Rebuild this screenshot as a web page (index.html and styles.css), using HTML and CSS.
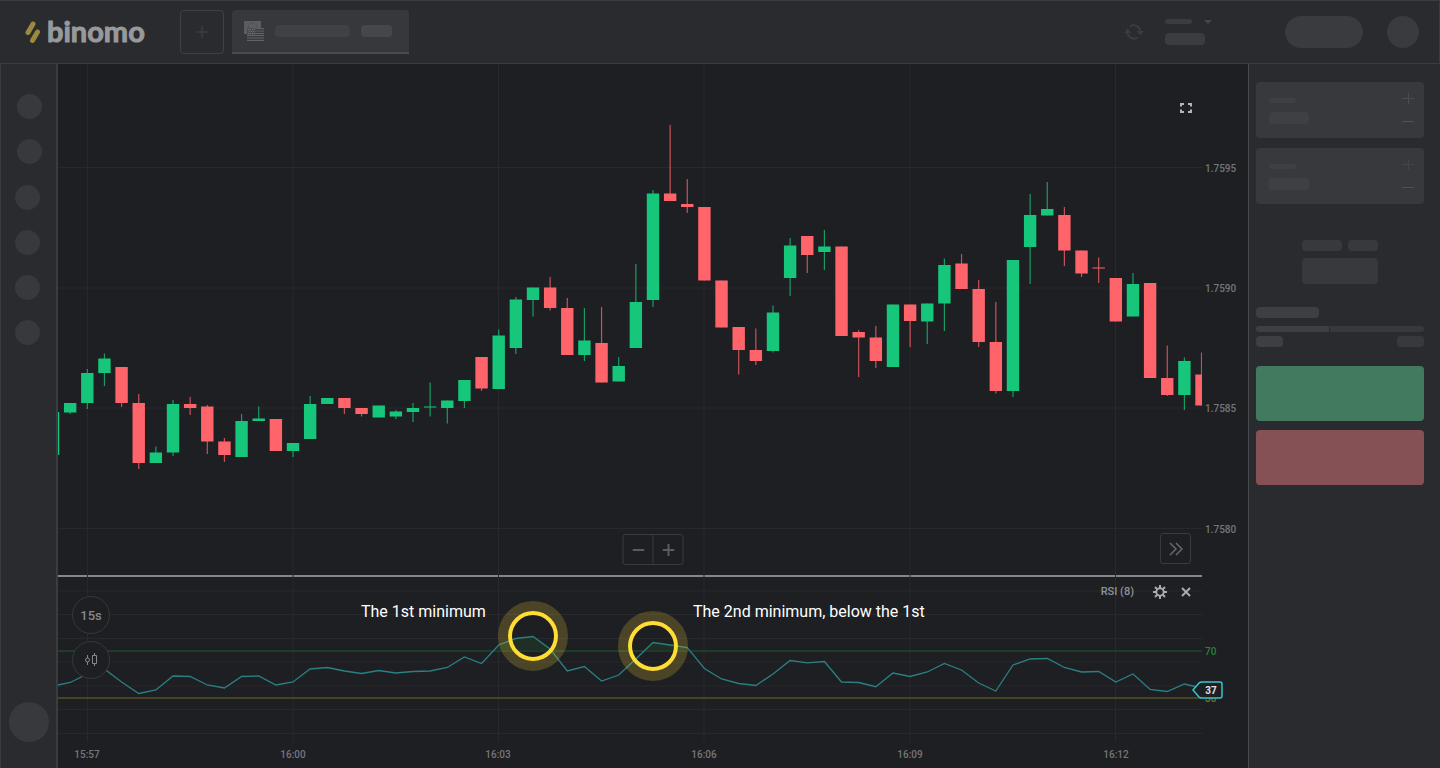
FILE: index.html
```html
<!DOCTYPE html>
<html lang="en">
<head>
<meta charset="utf-8">
<meta name="viewport" content="width=device-width, initial-scale=1">
<title>binomo</title>
<link rel="stylesheet" href="styles.css">
</head>
<body class="app">
<header class="topbar">
  <a class="logo" href="#" aria-label="binomo">
    <svg class="logo-mark" width="17" height="24" viewBox="0 0 17 24" aria-hidden="true">
      <path d="M4 12.500 9 4M8.500 20.500 13.500 12" />
    </svg>
    <span class="logo-name">binomo</span>
  </a>
  <button class="add-tab" type="button" aria-label="Add asset">
    <svg width="12" height="12" viewBox="0 0 12 12"><path d="M6 0V12M0 6H12" /></svg>
  </button>
  <button class="asset-tab" type="button" aria-label="Current asset">
    <svg class="flags" width="20" height="20" viewBox="0 0 20 20" aria-hidden="true">
      <rect width="17" height="13" fill="#5c5d60" />
      <circle cx="8.500" cy="6" r="4" fill="none" stroke="#47484c" stroke-dasharray="1 1" />
      <rect x="3" y="7" width="17" height="13" fill="#3a3b3f" />
      <path d="M3 7.500H20M3 10H20M3 12.500H20M3 14.500H20M3 17H20M3 19.500H20" stroke="#626366" />
      <rect x="3" y="7" width="8" height="7" fill="#4a4b4f" />
      <path d="M4 8.500H11M5 10.500H11M4 12.500H11" stroke="#717275" stroke-dasharray="1 1" />
    </svg>
    <span class="bar bar-asset"></span>
    <span class="bar bar-rate"></span>
  </button>
  <div class="account">
    <button class="sync" type="button" aria-label="Refresh">
      <svg width="20" height="16" viewBox="0 0 20 16">
        <path class="sync-arc" d="M6 2.500A6.800 6.800 0 0 1 16.500 8M14 13.500A6.800 6.800 0 0 1 3.500 8" />
        <path class="sync-head" d="M12.500 7H20L16.500 11.500ZM0 9 3.500 4.500 7.500 9Z" />
      </svg>
    </button>
    <button class="balance" type="button" aria-label="Balance">
      <span class="balance-top"><span class="bar bar-type"></span>
        <svg width="8" height="5" viewBox="0 0 8 5"><path d="M0 1H8L4 5Z" /></svg></span>
      <span class="bar bar-sum"></span>
    </button>
    <button class="deposit" type="button" aria-label="Deposit"></button>
    <button class="avatar" type="button" aria-label="Profile"></button>
  </div>
</header>

<div class="workspace">
  <nav class="rail" aria-label="Sections">
    <div class="rail-group rail-main">
      <button class="dot" type="button" aria-label="Section 1"></button>
      <button class="dot" type="button" aria-label="Section 2"></button>
    </div>
    <div class="rail-group">
      <button class="dot" type="button" aria-label="Section 3"></button>
      <button class="dot" type="button" aria-label="Section 4"></button>
      <button class="dot" type="button" aria-label="Section 5"></button>
      <button class="dot" type="button" aria-label="Section 6"></button>
    </div>
    <button class="support" type="button" aria-label="Support"></button>
  </nav>

  <main class="chart">
    <svg class="plot" viewBox="58 64 1190 704" preserveAspectRatio="xMidYMin meet" role="img" aria-label="Price chart with RSI">
      <defs>
        <clipPath id="plot-area"><rect x="58" y="64" width="1144" height="680" /></clipPath>
        <clipPath id="overbought"><rect x="58" y="580" width="1144" height="71" /></clipPath>
      </defs>
      <path class="split" d="M58 576H1202" />
      <g class="grid" id="grid"></g>
      <path class="level-high" d="M58 651H1202" />
      <path class="level-low" d="M58 698H1202" />
      <g id="candles" clip-path="url(#plot-area)"></g>
      <polygon class="rsi-fill" id="rsi-fill" clip-path="url(#overbought)" />
      <polyline class="rsi-line" id="rsi-line" clip-path="url(#plot-area)" />
      <g class="axis">
        <text x="1205" y="172">1.7595</text>
        <text x="1205" y="292">1.7590</text>
        <text x="1205" y="412">1.7585</text>
        <text x="1205" y="533">1.7580</text>
      </g>
      <g class="axis times">
        <text x="87" y="758">15:57</text>
        <text x="293" y="758">16:00</text>
        <text x="498" y="758">16:03</text>
        <text x="704" y="758">16:06</text>
        <text x="910" y="758">16:09</text>
        <text x="1116" y="758">16:12</text>
      </g>
      <text class="label-high" x="1205" y="655">70</text>
      <text class="label-low" x="1205" y="702">30</text>
      <path class="flag" d="M1193 690 1199 683Q1200 682 1202 682H1220Q1222 682 1222 684V696Q1222 698 1220 698H1202Q1200 698 1199 697Z" />
      <text class="flag-value" x="1211" y="694">37</text>
      <g class="halo"><circle cx="533" cy="636" r="30" /><circle cx="653" cy="646" r="30" /></g>
      <g class="ring"><circle cx="533" cy="636" r="23" /><circle cx="653" cy="646" r="23" /></g>
      <text class="note" x="361" y="617">The 1st minimum</text>
      <text class="note" x="693" y="617">The 2nd minimum, below the 1st</text>
    </svg>

    <button class="bare fullscreen" type="button" aria-label="Full screen">
      <svg width="12" height="10" viewBox="0 0 12 10"><path d="M1 3.500V1H4M8 1H11V3.500M11 6.500V9H8M4 9H1V6.500" /></svg>
    </button>
    <div class="zoom">
      <button type="button" aria-label="Zoom out"><svg width="12" height="12" viewBox="0 0 12 12"><path d="M0 6H12" /></svg></button>
      <button type="button" aria-label="Zoom in"><svg width="12" height="12" viewBox="0 0 12 12"><path d="M0 6H12M6 0V12" /></svg></button>
    </div>
    <button class="latest" type="button" aria-label="Latest">
      <svg width="14" height="14" viewBox="0 0 14 14"><path d="M1 1 7 7 1 13M7 1 13 7 7 13" /></svg>
    </button>
    <div class="indicator">
      <span class="indicator-name">RSI (8)</span>
      <button class="bare" type="button" aria-label="Settings">
        <svg width="14" height="14" viewBox="0 0 14 14">
          <circle cx="7" cy="7" r="3.700" /><path class="teeth" d="M7 0V3M7 11V14M0 7H3M11 7H14M2 2 4.200 4.200M9.800 9.800 12 12M12 2 9.800 4.200M4.200 9.800 2 12" />
        </svg>
      </button>
      <button class="bare" type="button" aria-label="Remove">
        <svg width="10" height="10" viewBox="0 0 10 10"><path d="M1 1 9 9M9 1 1 9" /></svg>
      </button>
    </div>
    <div class="chart-tools">
      <button type="button">15s</button>
      <button type="button" aria-label="Chart type">
        <svg width="12" height="14" viewBox="0 0 12 14"><path d="M2.500 2V5M2.500 9V12M9.500 0V2.500M9.500 10.500V13M.500 7Q.500 5 2.500 5T4.500 7 2.500 9 .500 7ZM7.500 2.500H11.500V10.500H7.500Z" /></svg>
      </button>
    </div>
  </main>

  <aside class="deal">
    <section class="field">
      <div class="field-text"><span class="bar bar-label"></span><span class="bar bar-value"></span></div>
      <div class="stepper">
        <button class="bare" type="button" aria-label="Increase amount"><svg width="12" height="11" viewBox="0 0 12 11"><path d="M0 5.500H12M6.500 0V11" /></svg></button>
        <button class="bare" type="button" aria-label="Decrease amount"><svg width="12" height="3" viewBox="0 0 12 3"><path class="minus" d="M0 1.500H12" /></svg></button>
      </div>
    </section>
    <section class="field field-dim">
      <div class="field-text"><span class="bar bar-label"></span><span class="bar bar-value"></span></div>
      <div class="stepper">
        <button class="bare" type="button" aria-label="Increase time"><svg width="12" height="11" viewBox="0 0 12 11"><path d="M0 5.500H12M6.500 0V11" /></svg></button>
        <button class="bare" type="button" aria-label="Decrease time"><svg width="12" height="3" viewBox="0 0 12 3"><path class="minus" d="M0 1.500H12" /></svg></button>
      </div>
    </section>
    <section class="profit">
      <span class="block block-wide"></span><span class="block"></span>
      <span class="block block-sum"></span>
    </section>
    <section class="mood">
      <span class="block mood-title"></span>
      <div class="mood-track"><span class="mood-up"></span><span class="mood-down"></span></div>
      <div class="mood-values"><span class="block"></span><span class="block"></span></div>
    </section>
    <button class="trade trade-up" type="button" aria-label="Up"></button>
    <button class="trade trade-down" type="button" aria-label="Down"></button>
  </aside>
</div>
<script src="chart.js"></script>
</body>
</html>
```

FILE: styles.css
```css
*, *::before, *::after { box-sizing: border-box; }

.app {
  --panel: #2a2b2f;
  --line: #3b3c40;
  --block: #38393d;
  --canvas: #1e1f23;
  margin: 0;
  min-height: 100vh;
  display: flex;
  flex-direction: column;
  background: var(--panel);
  font-family: Roboto, "Liberation Sans", sans-serif;
}

button {
  margin: 0;
  padding: 0;
  border: 0;
  background: none;
  font: inherit;
  color: inherit;
  cursor: pointer;
}

svg { display: block; fill: none; flex: none; }
.bar, .block { display: block; border-radius: 4px; }

/* Top bar */
.topbar {
  display: flex;
  align-items: center;
  height: 64px;
  padding: 0 20px 0 24px;
  border: 1px solid var(--line);
  border-left: 0;
}
.logo {
  display: flex;
  align-items: center;
  gap: 6px;
  width: 156px;
  color: #98999b;
  text-decoration: none;
}
.logo-mark { stroke: #9b8a3e; stroke-width: 5; stroke-linecap: round; }
.logo-name {
  padding-bottom: 2px;
  font: 700 29px/32px Lato, sans-serif;
  -webkit-text-stroke: 1px #98999b;
}
.add-tab {
  display: grid;
  place-items: center;
  width: 44px;
  height: 44px;
  border: 1px solid #3f4044;
  border-radius: 4px;
}
.add-tab svg { stroke: #434448; }
.asset-tab {
  display: flex;
  align-items: center;
  gap: 11px;
  width: 177px;
  height: 44px;
  margin-left: 8px;
  padding-left: 12px;
  background: #37383c;
  border-bottom: 2px solid #4a4b4f;
  border-radius: 4px 4px 0 0;
}
.asset-tab .bar { height: 12px; background: #404145; }
.bar-asset { width: 75px; }
.asset-tab .bar-rate { width: 31px; background: #46474b; }
.account { display: flex; align-items: center; margin-left: auto; }
.sync-arc { stroke: #3b3c40; stroke-width: 2; }
.sync-head { fill: #3b3c40; }
.balance { display: flex; flex-direction: column; gap: 9px; margin-left: 21px; }
.balance-top { display: flex; gap: 12px; }
.balance-top svg { fill: #46474b; }
.balance .bar { background: #3b3c40; }
.bar-type { width: 27px; height: 5px; }
.bar-sum { width: 40px; height: 12px; }
.deposit { width: 78px; height: 32px; margin-left: 73px; border-radius: 16px; background: #3a3b3e; }
.avatar { width: 32px; height: 32px; margin-left: 24px; border-radius: 50%; background: #3a3b3e; }

/* Workspace */
.workspace {
  flex: 1;
  display: grid;
  grid-template-columns: 58px minmax(0, 1fr) 192px;
}
.rail {
  display: flex;
  flex-direction: column;
  align-items: center;
  gap: 21px;
  padding: 30px 0 26px;
  border-left: 1px solid var(--line);
  border-right: 2px solid var(--line);
}
.rail-group { display: flex; flex-direction: column; gap: 20px; padding-right: 2px; }
.rail-main { padding: 0 0 0 2px; }
.dot { width: 25px; height: 25px; border-radius: 50%; background: var(--block); }
.support { width: 40px; height: 40px; margin-top: auto; border-radius: 50%; background: var(--block); }

/* Chart */
.chart { position: relative; background: var(--canvas); }
.plot { width: 100%; height: auto; }
.grid { stroke: #28292d; stroke-width: 1; }
.split { stroke: #86878a; stroke-width: 2; }
.level-high { stroke: #214329; stroke-width: 2; stroke-opacity: .8; }
.level-low { stroke: #504d26; stroke-width: 2; stroke-opacity: .8; }
.candle-up { fill: #16c67a; }
.candle-down { fill: #ff646b; }
.rsi-line { stroke: #2a8083; stroke-width: 1.3; }
.rsi-fill { fill: #1f3326; opacity: .8; }
.axis, .label-high, .label-low { fill: #75767a; font-size: 10px; font-weight: 500; }
.times { text-anchor: middle; }
.label-high { fill: #238636; }
.label-low { fill: #7b7424; }
.flag { fill: var(--canvas); stroke: #38c5c9; stroke-width: 1.5; }
.flag-value { fill: #e0e0e1; font-size: 10px; font-weight: 700; text-anchor: middle; }
.halo { stroke: #ffdd33; stroke-width: 10; stroke-opacity: .2; }
.ring { stroke: #ffdd33; stroke-width: 4; }
.note { fill: #fff; font-size: 16px; }

.fullscreen { position: absolute; top: 39px; right: 56px; }
.fullscreen svg { stroke: #b5b6b8; stroke-width: 2; }
.zoom {
  position: absolute;
  top: 470px;
  left: 50%;
  display: flex;
  width: 61px;
  height: 31px;
  transform: translateX(-50%);
  border: 1px solid #3a3b3f;
  border-radius: 3px;
}
.zoom button { flex: 1; display: grid; place-items: center; }
.zoom button + button { border-left: 1px solid #3a3b3f; }
.zoom svg { stroke: #5a5b5f; stroke-width: 2; }
.latest {
  position: absolute;
  top: 469px;
  right: 57px;
  display: grid;
  place-items: center;
  width: 31px;
  height: 31px;
  border: 1px solid #3a3b3f;
  border-radius: 3px;
}
.latest svg { stroke: #66676b; stroke-width: 1.5; }
.indicator {
  position: absolute;
  top: 520px;
  right: 57px;
  display: flex;
  align-items: center;
  gap: 14px;
  color: #919296;
  font-size: 11px;
  font-weight: 500;
  line-height: 16px;
}
.indicator-name { margin-right: 5px; }
.indicator svg { stroke: #aaabad; stroke-width: 2; }
.chart-tools {
  position: absolute;
  top: 532px;
  left: 14px;
  display: flex;
  flex-direction: column;
  gap: 7px;
}
.chart-tools button {
  display: grid;
  place-items: center;
  width: 38px;
  height: 38px;
  border: 1px solid #37383c;
  border-radius: 50%;
  background: var(--canvas);
  color: #87888b;
  font-size: 13px;
  font-weight: 500;
}
.chart-tools svg { stroke: #87888b; }

/* Deal panel */
.deal {
  display: flex;
  flex-direction: column;
  padding: 18px 16px 18px 7px;
  border-left: 1px solid #48494d;
}
.field {
  display: flex;
  justify-content: space-between;
  height: 56px;
  margin-bottom: 10px;
  padding: 11px 10px 11px 13px;
  border-radius: 4px;
  background: var(--block);
}
.field-text { display: flex; flex-direction: column; gap: 9px; padding-top: 5px; }
.field .bar { background: #3f4044; }
.bar-label { width: 27px; height: 5px; }
.bar-value { width: 40px; height: 12px; }
.stepper { display: flex; flex-direction: column; justify-content: space-between; padding-bottom: 4px; }
.stepper svg { stroke: #4a4b4f; }
.field-dim .stepper svg { stroke: #434448; }
.stepper .minus { stroke: #505155; }
.block { height: 11px; background: var(--block); }
.profit {
  display: grid;
  grid-template-columns: 40px 30px;
  justify-content: center;
  gap: 7px 6px;
  margin-top: 26px;
}
.block-sum { grid-column: 1 / -1; height: 26px; }
.mood { margin: 23px 0 19px; }
.mood-title { width: 63px; background: #3e3f43; }
.mood-track { display: flex; gap: 1px; height: 6px; margin: 8px 0 4px; border-radius: 3px; overflow: hidden; }
.mood-up { width: 73px; background: #3e3f43; }
.mood-down { flex: 1; background: var(--block); }
.mood-values { display: flex; justify-content: space-between; }
.mood-values .block { width: 27px; }
.mood-values .block:first-child { background: #3e3f43; }
.trade { height: 55px; margin-bottom: 9px; border-radius: 4px; }
.trade-up { background: #427a5f; }
.trade-down { background: #855155; }
```

FILE: chart.js
```js
// Each row: slot, direction, high, body top, body bottom, low.
const candles = [
  [-2,"up",412,412,455,455],[-1,"up",403,403,412.5,414],[0,"up",369,373,403,409],[1,"up",353.5,358.5,373,386],
  [2,"down",367,367,403,407],[3,"down",394,403,463,469],[4,"up",446.5,452.5,463,463],[5,"up",400,404,452.5,456],
  [6,"down",397,404,408,415],[7,"down",405,406.5,441.5,454],[8,"down",438,441.5,455,462],[9,"up",414,421,457,457],
  [10,"up",406.5,418.5,421,421],[11,"down",419,419,451,451],[12,"up",443,443,451,457],[13,"up",396,404,439,439],
  [14,"up",398,398,404,404],[15,"down",398,398,408,414],[16,"down",408,408,414,416.5],[17,"up",405.5,405.5,417.5,417.5],
  [18,"up",410,411.5,416.5,419],[19,"up",403,408,412,422],[20,"up",382.5,406.5,407.5,416.5],[21,"up",400.5,400.5,408,423.5],
  [22,"up",380,380,401,408],[23,"down",357,357,388.5,391],[24,"up",329.5,335.5,389,389],[25,"up",297,299.5,348,354],
  [26,"up",287.5,287.5,300,316.5],[27,"down",277,287.5,308,310.5],[28,"down",298,308,355,355],[29,"up",308,340.5,355,361],
  [30,"down",307,343,382.5,382.5],[31,"up",357,366,381.5,381.5],[32,"up",264,302,348,348],[33,"up",190,193.5,300,307],
  [34,"down",125,193.5,201,201],[35,"down",179,204,207,213],[36,"down",207,207,280.5,280.5],[37,"down",280.5,280.5,327.5,327.5],
  [38,"down",327,327,350,374.5],[39,"down",328.5,350,361,365],[40,"up",305.5,312.5,351,352.5],[41,"up",238,245.5,278,296],
  [42,"down",236,236,255,273],[43,"up",230,246.5,252,270],[44,"down",246.5,246.5,336,336],[45,"down",330,332,337.5,377],
  [46,"down",326,337.5,361,368],[47,"up",304.5,304.5,367,367],[48,"down",304.5,304.5,321,347],[49,"up",303.5,303.5,321.5,344],
  [50,"up",258.5,265,303.5,331],[51,"down",254,263.5,289,289],[52,"down",280,289,342,347],[53,"down",302,342,391,393.5],
  [54,"up",260,260,391,397],[55,"up",194,215,247,284],[56,"up",182,209,215.5,215.5],[57,"down",207,215,250.5,266],
  [58,"down",250.5,250.5,273.5,277],[59,"down",257.5,267.5,268.5,283],[60,"down",278,278,321.5,321.5],[61,"up",273,284,316.5,316.5],
  [62,"down",283,283,378,378],[63,"down",345.5,378,395,396],[64,"up",357.5,361,395,410],[65,"down",352.5,374.5,405.5,405.5]
];

// RSI heights, one per slot, starting at slot -2.
const rsi = [
  686,682.5,674,669,682,693.5,690,676,676.5,685,688,676.5,676,685,682,669,667.5,671,673.5,670.5,673,671.5,671,667.5,
  657,663.5,645,638.5,636.5,649,671,666.5,681,675,659,642.5,645,647.5,668.5,679,683.5,685.5,674,660.5,662.8,661.5,
  682,682.5,686.7,673,676.5,672,663.5,670,683,691,665,659,658.5,667.5,672,671.5,682,674,689.5,691.5,684,688
];

const SVG = "http://www.w3.org/2000/svg";
const slotX = slot => 87.3 + slot * 17.142;

function add(parent, tag, attributes) {
  const node = document.createElementNS(SVG, tag);
  for (const name in attributes) node.setAttribute(name, attributes[name]);
  parent.appendChild(node);
}

const grid = document.getElementById("grid");
[87.5, 293, 498.5, 704, 910, 1115.5].forEach(x => add(grid, "path", { d: `M${x} 64V742` }));
[167.5, 288, 408, 528.5, 591, 614.5, 638.5, 662, 686, 709.5, 733.5].forEach(y => add(grid, "path", { d: `M58 ${y}H1202` }));

const layer = document.getElementById("candles");
candles.forEach(([slot, direction, high, top, bottom, low]) => {
  const x = slotX(slot);
  const style = "candle-" + direction;
  add(layer, "rect", { class: style, x: x - 0.6, y: high, width: 1.2, height: low - high, opacity: 0.75 });
  add(layer, "rect", { class: style, x: x - 6.2, y: top, width: 12.4, height: bottom - top });
});

const points = rsi.map((y, i) => `${slotX(i - 2).toFixed(1)},${y}`).join(" ");
document.getElementById("rsi-line").setAttribute("points", points);
document.getElementById("rsi-fill").setAttribute("points", `53,740 ${points} 1201,740`);
```
